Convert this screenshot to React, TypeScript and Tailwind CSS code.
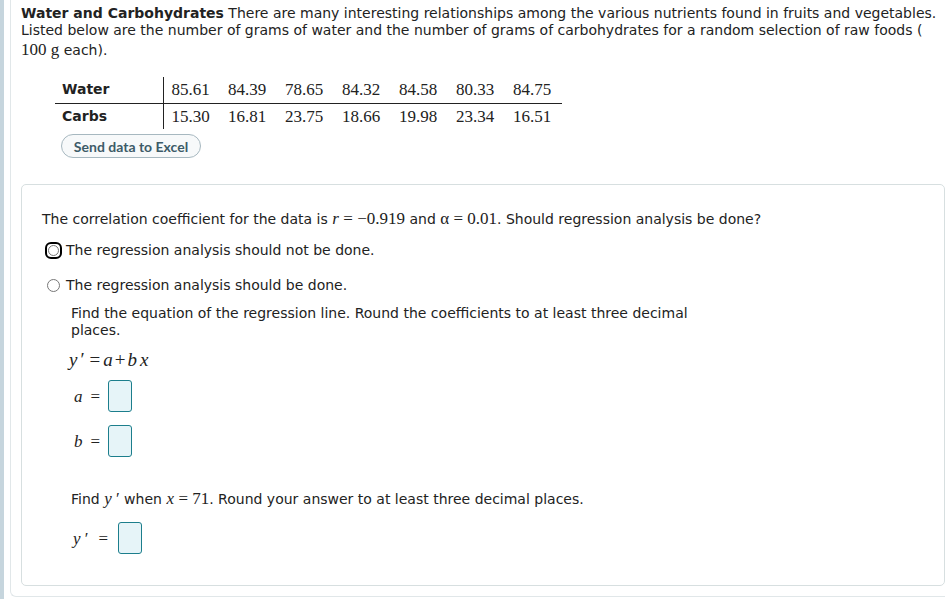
import React from 'react'

const water = ['85.61', '84.39', '78.65', '84.32', '84.58', '80.33', '84.75']
const carbs = ['15.30', '16.81', '23.75', '18.66', '19.98', '23.34', '16.51']

const sans = 'font-["DejaVu_Sans",Verdana,sans-serif]'
const serif = 'font-["Liberation_Serif","Times_New_Roman",serif]'

function AnswerBox() {
  return <span className="block w-[24px] h-[32px] border border-[#1c7e8c] bg-[#e6f4f8] rounded-[3px]" />
}

function Var({ children }: { children: React.ReactNode }) {
  return <span className={`${serif} italic text-[17px]`}>{children}</span>
}

export default function App() {
  return (
    <div className={`flex min-h-[599px] bg-white text-[14px] leading-[17px] text-[#222] ${sans}`}>
      <div className="w-[4px] shrink-0 bg-[#c6d5dd]" />
      <div className="flex-1 pl-[6px] pb-[2px]">
        <div className="border-l border-b border-[#e1e7e9] rounded-bl-[6px] pl-[10px] pt-[5px] pb-[10px]">
          {/* intro */}
          <p>
            <span className="block whitespace-nowrap">
              <b>Water and Carbohydrates</b> There are many interesting relationships among the various nutrients found in fruits and vegetables.
            </span>
            <span className="block whitespace-nowrap">
              Listed below are the number of grams of water and the number of grams of carbohydrates for a random selection of raw foods (
            </span>
            <span className="block whitespace-nowrap leading-[22px]">
              <span className={`${serif} text-[17px]`}>100 g</span> each).
            </span>
          </p>

          {/* data table */}
          <table className="ml-[34px] mt-[16px] border-collapse">
            <tbody>
              <tr className="h-[26px] border-b border-[#222]">
                <th className="w-[108px] text-left font-bold pl-[7px] border-r border-[#222]">Water</th>
                {water.map((v) => (
                  <td key={v} className={`w-[57px] pl-[8px] ${serif} text-[17px] text-[#222]`}>{v}</td>
                ))}
              </tr>
              <tr className="h-[26px]">
                <th className="text-left font-bold pl-[7px] border-r border-[#222]">Carbs</th>
                {carbs.map((v) => (
                  <td key={v} className={`pl-[8px] ${serif} text-[17px] text-[#222]`}>{v}</td>
                ))}
              </tr>
            </tbody>
          </table>

          <button className="ml-[40px] mt-[5px] h-[24px] w-[140px] rounded-full border border-[#a7b8c0] bg-[#f7f9fa] text-[14px] font-bold text-[#3d5b68] font-['Lato','Open_Sans',sans-serif]">
            Send data to Excel
          </button>

          {/* question card */}
          <div className="mt-[26px] border border-[#d7dfe0] rounded-[5px] pl-[20px] pt-[25px] h-[402px]">
            <p className="whitespace-nowrap">
              The correlation coefficient for the data is <Var>r</Var> <span className={`${serif} text-[17px]`}>= −0.919</span> and{' '}
              <span className={`${serif} text-[17px]`}>α = 0.01</span>. Should regression analysis be done?
            </p>

            <div className="mt-[13px] flex items-center h-[18px]">
              <span className="ml-[3px] w-[17px] h-[17px] rounded-[6px] border-2 border-black flex items-center justify-center">
                <span className="w-[11px] h-[11px] rounded-full border border-[#777] bg-white" />
              </span>
              <span className="ml-[4px]">The regression analysis should not be done.</span>
            </div>

            <div className="mt-[17px] flex items-center h-[18px]">
              <span className="ml-[5px] w-[13px] h-[13px] rounded-full border border-[#777] bg-white" />
              <span className="ml-[6px]">The regression analysis should be done.</span>
            </div>

            <div className="ml-[29px] mt-[11px]">
              <p className="w-[640px] leading-[17px]">
                Find the equation of the regression line. Round the coefficients to at least three decimal places.
              </p>

              <div className={`mt-[12px] ${serif} text-[19px] ml-[-2px]`}>
                <i>y</i>
                <span className="ml-[3px]">′</span>
                <span className="ml-[5px] mr-[3px]">=</span>
                <i>a</i>
                <span className="mx-[2px]">+</span>
                <i>b</i>
                <i className="ml-[3px]">x</i>
              </div>

              <div className="mt-[12px] flex items-center gap-[8px] ml-[3px]">
                <span className={`${serif} italic text-[17px]`}>a</span>
                <span className={`${serif} text-[17px]`}>=</span>
                <AnswerBox />
              </div>

              <div className="mt-[13px] flex items-center gap-[8px] ml-[3px]">
                <span className={`${serif} italic text-[17px]`}>b</span>
                <span className={`${serif} text-[17px]`}>=</span>
                <AnswerBox />
              </div>

              <p className="mt-[33px] whitespace-nowrap">
                Find <Var>y</Var><span className={`${serif} text-[17px]`}> ′</span> when <Var>x</Var>{' '}
                <span className={`${serif} text-[17px]`}>= 71</span>. Round your answer to at least three decimal places.
              </p>

              <div className="mt-[14px] flex items-center gap-[10px] ml-[2px]">
                <span className={`${serif} text-[17px]`}>
                  <i>y</i> ′
                </span>
                <span className={`${serif} text-[17px]`}>=</span>
                <AnswerBox />
              </div>
            </div>
          </div>
        </div>
      </div>
    </div>
  )
}
